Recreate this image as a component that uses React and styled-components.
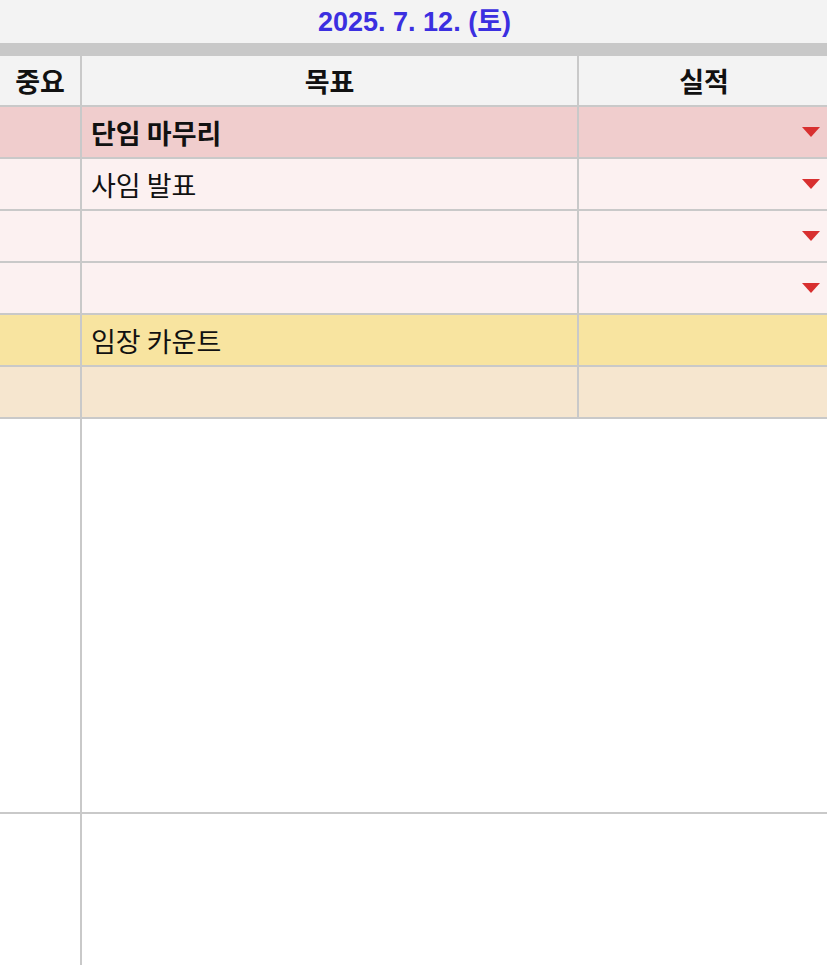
import React from 'react'
import styled, { createGlobalStyle } from 'styled-components'

const GlobalStyle = createGlobalStyle`
    html, body {
        margin: 0;
        padding: 0;
        background: #ffffff;
        font-family: "Noto Sans CJK KR", "Noto Sans", sans-serif;
        overflow: hidden;
    }
`;

const Page = styled.div`
    width: 827px;
    height: 965px;
    overflow: hidden;
    display: flex;
    flex-direction: column;
`;

const DateBar = styled.div`
    height: 43px;
    box-sizing: border-box;
    padding: 0 0 5px 2px;
    background: #f3f3f3;
    display: flex;
    align-items: center;
    justify-content: center;
    color: #3b2fe0;
    font-family: "Liberation Sans", "Noto Sans CJK KR", sans-serif;
    font-weight: bold;
    font-size: 27px;
`;

const Freeze = styled.div`
    height: 13px;
    background: #c8c8c8;
`;

const Sheet = styled.div`
    flex: 1;
    display: grid;
    grid-template-columns: 80px 495px 1fr;
    grid-template-rows: 49px repeat(6, 50px) 393px 1fr;
    gap: 2px;
    background: #c9c9c9;
    margin-right: -2px;
`;

const HeadCell = styled.div`
    background: #f3f3f3;
    display: flex;
    align-items: center;
    justify-content: center;
    font-weight: bold;
    font-size: 27px;
    color: #111111;
`;

const Cell = styled.div`
    background: ${p => p.bg};
    display: flex;
    align-items: center;
    justify-content: ${p => p.right ? 'flex-end' : 'flex-start'};
    padding: ${p => p.right ? '0 9px 0 0' : '0 0 0 9px'};
    font-size: 27px;
    font-weight: ${p => p.bold ? 'bold' : 'normal'};
    color: #111111;
    white-space: nowrap;
`;

const BlankCell = styled.div`
    background: #ffffff;
    grid-column: ${p => p.wide ? 'span 2' : 'auto'};
`;

const Arrow = () => (
    <svg width="18" height="10" viewBox="0 0 18 10">
        <polygon points="0,0 18,0 9,10" fill="#d83030" />
    </svg>
)

const rows = [
    { bg: '#f0cdcd', goal: '단임 마무리', bold: true, arrow: true },
    { bg: '#fcf1f1', goal: '사임 발표', arrow: true },
    { bg: '#fcf1f1', goal: '', arrow: true },
    { bg: '#fcf1f1', goal: '', arrow: true },
    { bg: '#f8e4a0', goal: '임장 카운트' },
    { bg: '#f6e6cf', goal: '' },
]

export default function App(){
    return (
        <Page>
            <GlobalStyle />
            <DateBar>2025. 7. 12. (토)</DateBar>
            <Freeze />
            <Sheet>
                <HeadCell>중요</HeadCell>
                <HeadCell>목표</HeadCell>
                <HeadCell>실적</HeadCell>

                {rows.map((row, i) => (
                    <React.Fragment key={`row${i}`}>
                        <Cell bg={row.bg} />
                        <Cell bg={row.bg} bold={row.bold}>{row.goal}</Cell>
                        <Cell bg={row.bg} right>{row.arrow && <Arrow />}</Cell>
                    </React.Fragment>
                ))}

                <BlankCell />
                <BlankCell wide />
                <BlankCell />
                <BlankCell wide />
            </Sheet>
        </Page>
    )
}
